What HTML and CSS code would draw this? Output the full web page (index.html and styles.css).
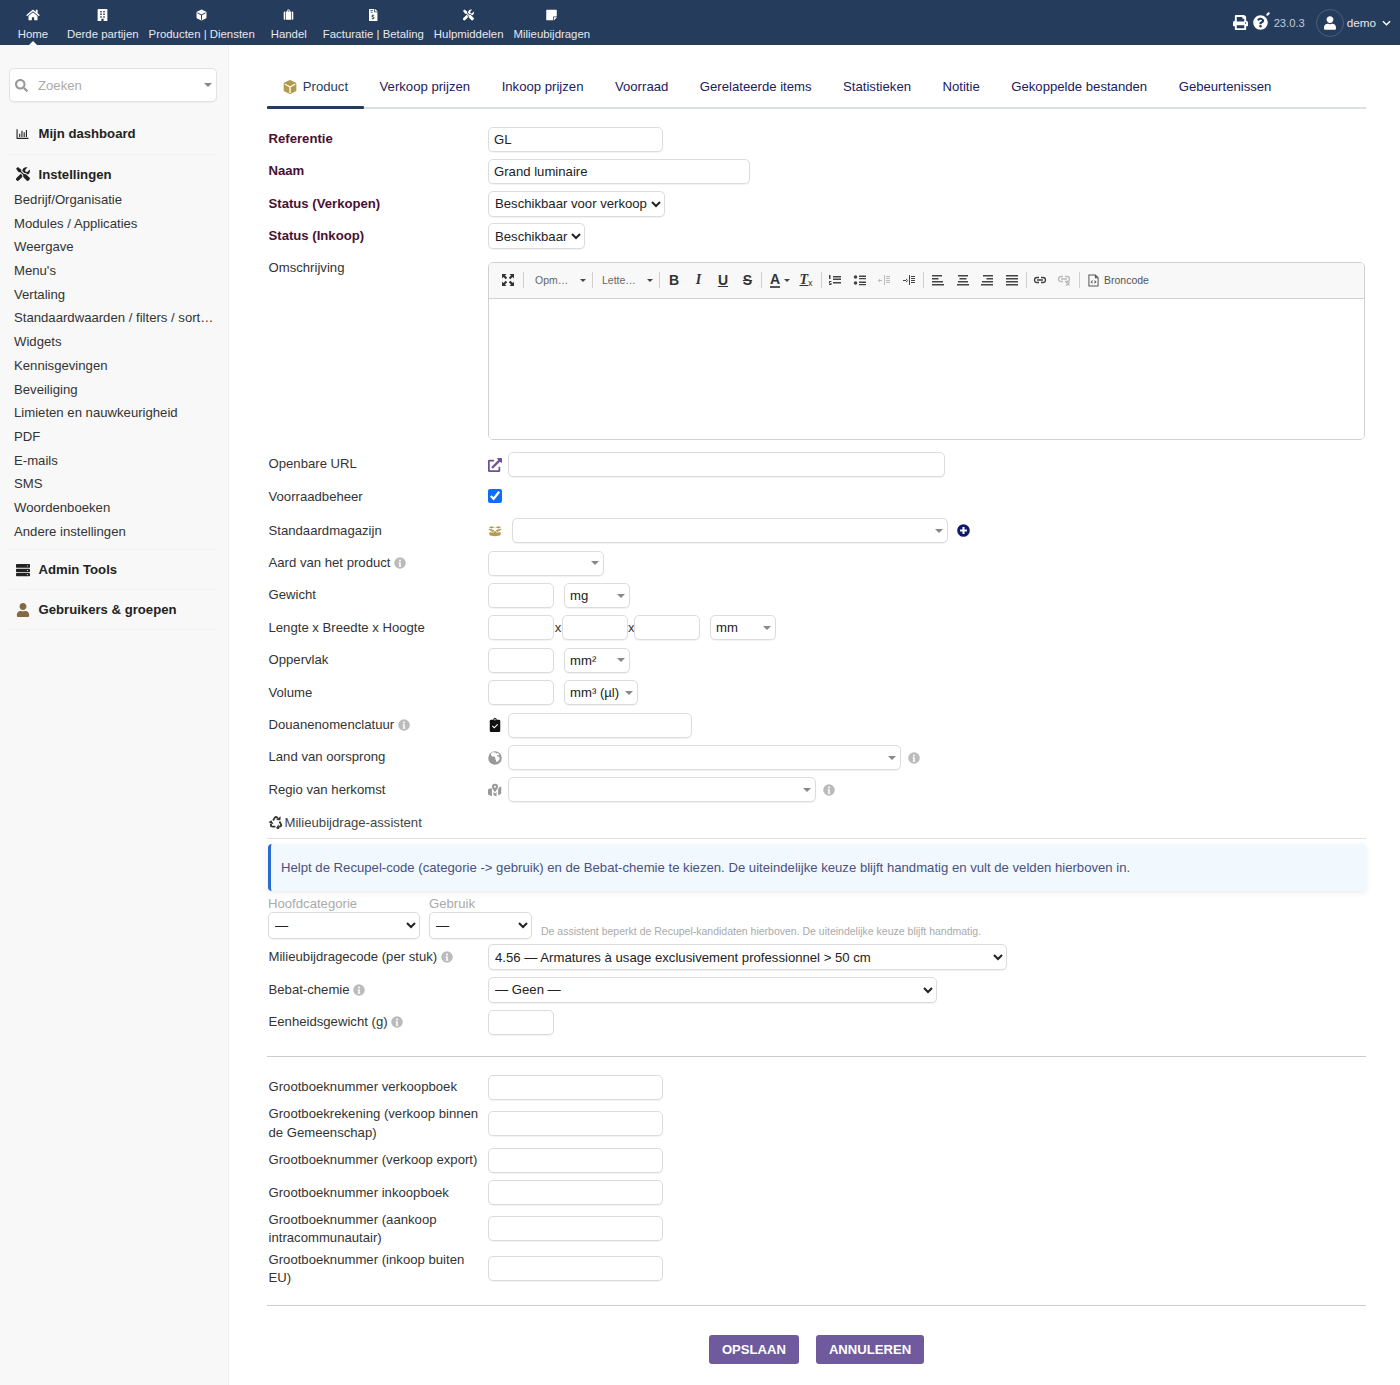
FILE: index.html
```html
<!DOCTYPE html>
<html lang="nl">
<head>
<meta charset="utf-8">
<title>Product</title>
<link rel="stylesheet" href="styles.css">
</head>
<body>
<svg class="defs" aria-hidden="true">
<symbol id="i-home" viewBox="0 0 576 512"><path d="M280.37 148.26L96 300.11V464a16 16 0 0 0 16 16l112.06-.29a16 16 0 0 0 15.92-16V368a16 16 0 0 1 16-16h64a16 16 0 0 1 16 16v95.64a16 16 0 0 0 16 16.05L464 480a16 16 0 0 0 16-16V300L295.67 148.26a12.19 12.19 0 0 0-15.3 0zM571.6 251.47L488 182.56V44.05a12 12 0 0 0-12-12h-56a12 12 0 0 0-12 12v72.61L318.47 43a48 48 0 0 0-61 0L4.34 251.47a12 12 0 0 0-1.6 16.9l25.5 31A12 12 0 0 0 45.15 301l235.22-193.74a12.19 12.19 0 0 1 15.3 0L530.9 301a12 12 0 0 0 16.9-1.6l25.5-31a12 12 0 0 0-1.7-16.93z"/></symbol>
<symbol id="i-user" viewBox="0 0 448 512"><path d="M224 256c70.7 0 128-57.3 128-128S294.7 0 224 0 96 57.3 96 128s57.3 128 128 128zm89.6 32h-16.7c-22.2 10.2-46.9 16-72.9 16s-50.6-5.8-72.9-16h-16.7C60.2 288 0 348.2 0 422.4V464c0 26.5 21.5 48 48 48h352c26.5 0 48-21.5 48-48v-41.6c0-74.2-60.2-134.4-134.4-134.4z"/></symbol>
<symbol id="i-building" viewBox="0 0 448 512"><path fill-rule="evenodd" d="M40 0h368a24 24 0 0 1 24 24v488H272v-96h-96v96H16V24A24 24 0 0 1 40 0zM128 80v64h64V80zm128 0v64h64V80zM128 192v64h64v-64zm128 0v64h64v-64zM128 304v64h64v-64zm128 0v64h64v-64z"/></symbol>
<symbol id="i-cube" viewBox="0 0 512 512"><path fill-rule="evenodd" d="M230 6a60 60 0 0 1 52 0l176 84a50 50 0 0 1 30 46v240a50 50 0 0 1-30 46L282 506a60 60 0 0 1-52 0L54 422a50 50 0 0 1-30-46V136a50 50 0 0 1 30-46zM64 132v46l168 84v212h48V262l168-84v-46L256 228z"/></symbol>
<symbol id="i-suitcase" viewBox="0 0 512 512"><path d="M128 480h256V96h-64V48a48 48 0 0 0-48-48h-32a48 48 0 0 0-48 48v48h-64zM224 48h64v48h-64zM32 144a48 48 0 0 1 48-48h16v384H80a48 48 0 0 1-48-48zM416 96h16a48 48 0 0 1 48 48v288a48 48 0 0 1-48 48h-16z"/></symbol>
<symbol id="i-invoice" viewBox="0 0 384 512"><path fill-rule="evenodd" d="M24 0h200v136h136v352a24 24 0 0 1-24 24H24a24 24 0 0 1-24-24V24A24 24 0 0 1 24 0zM256 0l128 104H256zM64 56v32h96V56zm0 64v32h96v-32zm120 112h-32v26c-26 4-44 22-44 46 0 30 26 42 52 50 24 7 28 12 28 20 0 10-10 14-24 14-12 0-28-6-36-12l-14 28c10 8 24 14 38 16v26h32v-26c28-4 46-22 46-48 0-30-24-42-52-50-22-6-28-12-28-20 0-8 8-12 20-12 10 0 22 4 32 10l14-28c-8-6-20-10-32-12z"/></symbol>
<symbol id="i-tools" viewBox="0 0 512 512"><path d="M501 396L384 279c-23-23-57-27-85-14L194 160V96L66 0 2 64l96 128h64l105 105c-13 28-9 62 14 85l117 117c15 15 38 15 53 0l50-50c14-15 14-38 0-53zM332 222c28 0 55 11 75 31l20 20c16-7 31-17 43-29 36-36 48-86 37-132-2-9-13-12-20-5l-74 74-67-11-11-67 74-74c7-7 4-18-5-20-46-11-97 1-132 37-28 28-41 64-40 101l82 82c5-1 12-7 18-7zM229 303l-57-57L18 399c-25 25-25 65 0 90s65 25 90 0l125-124c-8-20-10-42-4-62z"/></symbol>
<symbol id="i-note" viewBox="0 0 448 512"><path d="M312 320h136V56a24 24 0 0 0-24-24H24A24 24 0 0 0 0 56v400a24 24 0 0 0 24 24h264V344a24 24 0 0 1 24-24zm129 55L343 473a24 24 0 0 1-17 7h-6V352h128v6a24 24 0 0 1-7 17z"/></symbol>
<symbol id="i-print" viewBox="0 0 512 512"><path fill-rule="evenodd" d="M448 192V77a32 32 0 0 0-9-23L393 9a32 32 0 0 0-23-9H96A32 32 0 0 0 64 32v160c-35 0-64 29-64 64v112c0 9 7 16 16 16h48v112c0 18 14 32 32 32h320c18 0 32-14 32-32V384h48c9 0 16-7 16-16V256c0-35-29-64-64-64zM384 448H128v-96h256zm0-224H128V64h192v48c0 9 7 16 16 16h48zm48 72a24 24 0 1 1 0-48 24 24 0 0 1 0 48z"/></symbol>
<symbol id="i-question" viewBox="0 0 512 512"><path d="M504 256c0 137-111 248-248 248S8 393 8 256 119 8 256 8s248 111 248 248zM263 90c-54 0-89 23-116 63a12 12 0 0 0 3 16l35 26c5 4 13 3 17-2 18-22 30-35 57-35 20 0 45 13 45 33 0 15-12 22-32 34-24 13-55 30-55 71v6c0 7 5 12 12 12h56c7 0 12-5 12-12v-2c0-28 83-29 83-106 0-58-60-104-117-104zm-7 248a46 46 0 1 0 0 92 46 46 0 0 0 0-92z"/></symbol>
<symbol id="i-search" viewBox="0 0 512 512"><path d="M505 442.700L405.300 343c-4.500-4.500-10.600-7-17-7H372c27.600-35.300 44-79.700 44-128C416 93.100 322.900 0 208 0S0 93.100 0 208s93.100 208 208 208c48.300 0 92.700-16.400 128-44v16.300c0 6.400 2.500 12.500 7 17l99.700 99.700c9.400 9.400 24.600 9.400 33.900 0l28.300-28.300c9.400-9.400 9.400-24.600.1-34zM208 336c-70.700 0-128-57.200-128-128 0-70.700 57.200-128 128-128 70.700 0 128 57.200 128 128 0 70.700-57.200 128-128 128z"/></symbol>
<symbol id="i-chart" viewBox="0 0 512 512"><path d="M0 48h48v368h464v48H24a24 24 0 0 1-24-24zM112 240h48v144h-48zM208 112h48v272h-48zM304 176h48v208h-48zM400 80h48v304h-48z"/></symbol>
<symbol id="i-server" viewBox="0 0 512 512"><path fill-rule="evenodd" d="M32 32h448a32 32 0 0 1 32 32v80a32 32 0 0 1-32 32H32a32 32 0 0 1-32-32V64a32 32 0 0 1 32-32zM416 84a20 20 0 1 0 0 40 20 20 0 0 0 0-40zM32 208h448a32 32 0 0 1 32 32v64a32 32 0 0 1-32 32H32a32 32 0 0 1-32-32v-64a32 32 0 0 1 32-32zM416 252a20 20 0 1 0 0 40 20 20 0 0 0 0-40zM32 368h448a32 32 0 0 1 32 32v48a32 32 0 0 1-32 32H32a32 32 0 0 1-32-32v-48a32 32 0 0 1 32-32zM416 404a20 20 0 1 0 0 40 20 20 0 0 0 0-40z"/></symbol>
<symbol id="i-info" viewBox="0 0 512 512"><path fill-rule="evenodd" d="M256 8a248 248 0 1 1 0 496 248 248 0 0 1 0-496zM256 110a42 42 0 1 0 0 84 42 42 0 0 0 0-84zM200 226v48h24v96h-24v48h112v-48h-24V226z"/></symbol>
<symbol id="i-ext" viewBox="0 0 512 512"><path d="M432 320h-32a16 16 0 0 0-16 16v112H64V128h144a16 16 0 0 0 16-16V80a16 16 0 0 0-16-16H48a48 48 0 0 0-48 48v352a48 48 0 0 0 48 48h352a48 48 0 0 0 48-48V336a16 16 0 0 0-16-16zM488 0H360c-21.400 0-32 25.900-17 41l35.700 35.700L135 320.400a24 24 0 0 0 0 34l22.700 22.600a24 24 0 0 0 34 0l243.600-243.700L471 169c15 15 41 4.500 41-17V24a24 24 0 0 0-24-24z"/></symbol>
<symbol id="i-box" viewBox="0 0 640 512"><path d="M40 90l130-50 150 55 150-55 130 50-110 50-170-50-170 50zM10 180l60-30 220 70-70 90zM630 180l-60-30-220 70 70 90zM64 300l170 40 86-90 86 90 170-40v120c0 20-10 30-30 36L320 500 94 456c-20-6-30-16-30-36z"/></symbol>
<symbol id="i-clip" viewBox="0 0 384 512"><path fill-rule="evenodd" d="M48 64h80a64 64 0 0 1 128 0h80a48 48 0 0 1 48 48v352a48 48 0 0 1-48 48H48a48 48 0 0 1-48-48V112a48 48 0 0 1 48-48zM192 40a24 24 0 1 0 0 48 24 24 0 0 0 0-48zM305 248l-28-28-113 112-56-57-28 28 84 85z"/></symbol>
<symbol id="i-globe" viewBox="0 0 512 512"><path d="M256 8a248 248 0 1 0 0 496 248 248 0 0 0 0-496zm160 124l-24 24-48-8-16 24 32 32h40l24 40v40c-16 48-64 104-104 120l-24-16v-56l-32-32 8-48-48-48h-72l-48-64 16-56 32-32 56-16 24 16 48-8-8 40 32 8 40-24z"/></symbol>
<symbol id="i-map" viewBox="0 0 576 512"><path fill-rule="evenodd" d="M288 0a126 126 0 0 1 126 126c0 56-75 156-104 190a29 29 0 0 1-44 0c-29-34-104-134-104-190A126 126 0 0 1 288 0zm0 84a42 42 0 1 0 0 84 42 42 0 0 0 0-84zM32 215l104-42c6 16 14 33 24 50v289L22 448a32 32 0 0 1-22-30V245a32 32 0 0 1 32-30zM224 330l36 46c14 18 42 18 56 0l36-46v182l-128-43zM544 155v236a32 32 0 0 1-20 30l-108 46V223c16-26 28-50 36-74l72-28a20 20 0 0 1 20 34z"/></symbol>
<symbol id="i-recycle" viewBox="0 0 24 24">
  <path d="M7 9.500L10 4.500Q12 2.500 14 4.500L15 6" fill="none" stroke-width="3" stroke="currentColor"/><path d="M12 8.500l7.500.5.500-7z"/>
  <g transform="rotate(120 12 13.500)"><path d="M7 9.500L10 4.500Q12 2.500 14 4.500L15 6" fill="none" stroke-width="3" stroke="currentColor"/><path d="M12 8.500l7.500.5.500-7z"/></g>
  <g transform="rotate(240 12 13.500)"><path d="M7 9.500L10 4.500Q12 2.500 14 4.500L15 6" fill="none" stroke-width="3" stroke="currentColor"/><path d="M12 8.500l7.500.5.500-7z"/></g>
</symbol>
<symbol id="i-plus" viewBox="0 0 512 512"><path fill-rule="evenodd" d="M256 8a248 248 0 1 1 0 496 248 248 0 0 1 0-496zM216 120v96h-96v80h96v96h80v-96h96v-80h-96v-96z"/></symbol>
</svg>

<header class="topbar">
  <nav class="topnav">
    <a class="topitem active"><svg class="ti wide"><use href="#i-home"/></svg><span>Home</span></a>
    <a class="topitem"><svg class="ti"><use href="#i-building"/></svg><span>Derde partijen</span></a>
    <a class="topitem"><svg class="ti"><use href="#i-cube"/></svg><span>Producten | Diensten</span></a>
    <a class="topitem"><svg class="ti"><use href="#i-suitcase"/></svg><span>Handel</span></a>
    <a class="topitem"><svg class="ti"><use href="#i-invoice"/></svg><span>Facturatie | Betaling</span></a>
    <a class="topitem"><svg class="ti"><use href="#i-tools"/></svg><span>Hulpmiddelen</span></a>
    <a class="topitem"><svg class="ti"><use href="#i-note"/></svg><span>Milieubijdragen</span></a>
  </nav>
  <div class="topright">
    <svg class="tr-icon"><use href="#i-print"/></svg>
    <span class="helpicon"><svg class="tr-icon"><use href="#i-question"/></svg><i class="helpdot"></i></span>
    <span class="version">23.0.3</span>
    <span class="avatar"><svg class="avatar-i"><use href="#i-user"/></svg></span>
    <span class="username">demo</span>
    <svg class="chev" viewBox="0 0 10 6"><path d="M1 1l4 4 4-4" fill="none" stroke="currentColor" stroke-width="1.500"/></svg>
  </div>
</header>

<div class="layout">
  <aside class="sidebar">
    <div class="search"><svg class="search-i"><use href="#i-search"/></svg><span class="search-t">Zoeken</span><i class="caret"></i></div>
    <div class="sb-block first"><svg class="sb-i"><use href="#i-chart"/></svg><span>Mijn dashboard</span></div>
    <div class="sb-group">
      <div class="sb-head"><svg class="sb-i big"><use href="#i-tools"/></svg><span>Instellingen</span></div>
      <a class="sb-link">Bedrijf/Organisatie</a>
      <a class="sb-link">Modules / Applicaties</a>
      <a class="sb-link">Weergave</a>
      <a class="sb-link">Menu's</a>
      <a class="sb-link">Vertaling</a>
      <a class="sb-link">Standaardwaarden / filters / sort…</a>
      <a class="sb-link">Widgets</a>
      <a class="sb-link">Kennisgevingen</a>
      <a class="sb-link">Beveiliging</a>
      <a class="sb-link">Limieten en nauwkeurigheid</a>
      <a class="sb-link">PDF</a>
      <a class="sb-link">E-mails</a>
      <a class="sb-link">SMS</a>
      <a class="sb-link">Woordenboeken</a>
      <a class="sb-link">Andere instellingen</a>
    </div>
    <div class="sb-block"><svg class="sb-i big"><use href="#i-server"/></svg><span>Admin Tools</span></div>
    <div class="sb-block"><svg class="sb-i big brown"><use href="#i-user"/></svg><span>Gebruikers &amp; groepen</span></div>
  </aside>

  <main class="main">
    <div class="tabs">
      <a class="tab active"><svg class="tab-i"><use href="#i-cube"/></svg>Product</a>
      <a class="tab">Verkoop prijzen</a>
      <a class="tab">Inkoop prijzen</a>
      <a class="tab">Voorraad</a>
      <a class="tab">Gerelateerde items</a>
      <a class="tab">Statistieken</a>
      <a class="tab">Notitie</a>
      <a class="tab">Gekoppelde bestanden</a>
      <a class="tab">Gebeurtenissen</a>
    </div>

    <form class="form">
      <div class="row"><label class="lab req">Referentie</label><div class="f"><input class="in w175" value="GL"></div></div>
      <div class="row"><label class="lab req">Naam</label><div class="f"><input class="in w262" value="Grand luminaire"></div></div>
      <div class="row"><label class="lab req">Status (Verkopen)</label><div class="f"><select class="nat w177"><option>Beschikbaar voor verkoop</option></select></div></div>
      <div class="row"><label class="lab req">Status (Inkoop)</label><div class="f"><select class="nat w97"><option>Beschikbaar</option></select></div></div>
      <div class="row top"><label class="lab">Omschrijving</label>
        <div class="editor">
          <div class="toolbar">
            <span class="tb fs"><svg viewBox="0 0 14 14"><path d="M1 1h4.500L4 2.500 6.200 4.700 4.700 6.200 2.500 4 1 5.500zM13 1v4.500L11.500 4 9.300 6.200 7.800 4.700 10 2.500 8.500 1zM1 13V8.500L2.500 10l2.200-2.200 1.500 1.500L4 11.500 5.500 13zM13 13H8.500l1.500-1.500-2.200-2.200 1.500-1.500L12 10l1-1.500z"/></svg></span>
            <i class="sep s1"></i>
            <span class="combo">Opm…<i class="tcaret"></i></span>
            <i class="sep s2"></i>
            <span class="combo">Lette…<i class="tcaret"></i></span>
            <i class="sep s3"></i>
            <span class="tb b">B</span><span class="tb it">I</span><span class="tb u">U</span><span class="tb s">S</span>
            <i class="sep s4"></i>
            <span class="tb color"><span>A</span><i class="tcaret"></i></span>
            <span class="tb clear"><span>T</span><small>x</small></span>
            <i class="sep s5"></i>
            <span class="tb ic"><svg viewBox="0 0 14 12"><path d="M1 1h1.500v4H1zM1 7h2.500v1H2v1h1.500v2H1v-1h1.500V9.500H1zM5 2h8v1.500H5zM5 4.500h8V6H5zM5 8h8v1.500H5z"/></svg></span>
            <span class="tb ic"><svg viewBox="0 0 14 12"><circle cx="2.500" cy="3" r="1.800"/><circle cx="2.500" cy="9" r="1.800"/><path d="M6 1.500h7V3H6zM6 4h7v1.200H6zM6 7.500h7V9H6zM6 10h7v1.200H6z"/></svg></span>
            <span class="tb ic off"><svg viewBox="0 0 14 12"><path d="M7 1h1v10H7zM9 2h4v1H9zM9 4h4v1H9zM9 6h4v1H9zM9 8h4v1H9zM1 6h4v1H1zM1 6.500L3 4.500v4z"/></svg></span>
            <span class="tb ic"><svg viewBox="0 0 14 12"><path d="M7 1h1v10H7zM9 2h4v1H9zM9 4h4v1H9zM9 6h4v1H9zM9 8h4v1H9zM1 6h4v1H1zM6 6.500L4 4.500v4z"/></svg></span>
            <i class="sep s6"></i>
            <span class="tb ic"><svg viewBox="0 0 14 12"><path d="M1 1h10v1.500H1zM1 4h6.500v1.500H1zM1 7h11v1.500H1zM1 10h12v1.500H1z"/></svg></span>
            <span class="tb ic"><svg viewBox="0 0 14 12"><path d="M2 1h10v1.500H2zM3.500 4h7v1.500h-7zM2 7h10v1.500H2zM1 10h12v1.500H1z"/></svg></span>
            <span class="tb ic"><svg viewBox="0 0 14 12"><path d="M3 1h10v1.500H3zM6.500 4H13v1.500H6.500zM2 7h11v1.500H2zM1 10h12v1.500H1z"/></svg></span>
            <span class="tb ic"><svg viewBox="0 0 14 12"><path d="M1 1h12v1.500H1zM1 4h12v1.500H1zM1 7h12v1.500H1zM1 10h12v1.500H1z"/></svg></span>
            <i class="sep s7"></i>
            <span class="tb ic"><svg viewBox="0 0 14 12"><path fill="none" stroke="currentColor" stroke-width="1.300" d="M6 3.500H4a2.500 2.500 0 0 0 0 5h2M8 3.500h2a2.500 2.500 0 0 1 0 5H8M4 6h6"/></svg></span>
            <span class="tb ic off"><svg viewBox="0 0 14 12"><path fill="none" stroke="currentColor" stroke-width="1.300" d="M6 2.500H4a2.500 2.500 0 0 0 0 5h2M8 2.500h2a2.500 2.500 0 0 1 0 5H8M4 5h6M9 8l3.500 3.500M12.500 8L9 11.500"/></svg></span>
            <i class="sep s8"></i>
            <span class="source"><svg viewBox="0 0 12 14"><path fill="none" stroke="currentColor" stroke-width="1.100" d="M1 1h7l3 3v9H1zM8 1v3h3M5 7L3.500 8.500 5 10M7 7l1.500 1.500L7 10"/></svg>Broncode</span>
          </div>
          <div class="editarea"></div>
        </div>
      </div>

      <div class="row"><label class="lab">Openbare URL</label><div class="f"><svg class="fi purple"><use href="#i-ext"/></svg><input class="in w437 g6"></div></div>
      <div class="row"><label class="lab">Voorraadbeheer</label><div class="f"><input type="checkbox" class="chk" checked></div></div>
      <div class="row mag"><label class="lab">Standaardmagazijn</label><div class="f"><svg class="fi gold"><use href="#i-box"/></svg><span class="sel w436 g10"><i class="caret"></i></span><svg class="plus"><use href="#i-plus"/></svg></div></div>
      <div class="row"><label class="lab">Aard van het product <svg class="info"><use href="#i-info"/></svg></label><div class="f"><span class="sel w116"><i class="caret"></i></span></div></div>
      <div class="row"><label class="lab">Gewicht</label><div class="f"><input class="in w66"><span class="sel w66 g10">mg<i class="caret"></i></span></div></div>
      <div class="row"><label class="lab">Lengte x Breedte x Hoogte</label><div class="f"><input class="in w66"><span class="x">x</span><input class="in w66"><span class="x x2">x</span><input class="in w66"><span class="sel w66 g10">mm<i class="caret"></i></span></div></div>
      <div class="row"><label class="lab">Oppervlak</label><div class="f"><input class="in w66"><span class="sel w66 g10">mm²<i class="caret"></i></span></div></div>
      <div class="row"><label class="lab">Volume</label><div class="f"><input class="in w66"><span class="sel w74 g10">mm³ (µl)<i class="caret"></i></span></div></div>
      <div class="row"><label class="lab">Douanenomenclatuur <svg class="info"><use href="#i-info"/></svg></label><div class="f"><svg class="fi dark"><use href="#i-clip"/></svg><input class="in w184 g6"></div></div>
      <div class="row"><label class="lab">Land van oorsprong</label><div class="f"><svg class="fi gray"><use href="#i-globe"/></svg><span class="sel w393 g6"><i class="caret"></i></span><svg class="info after"><use href="#i-info"/></svg></div></div>
      <div class="row"><label class="lab">Regio van herkomst</label><div class="f"><svg class="fi gray"><use href="#i-map"/></svg><span class="sel w308 g6"><i class="caret"></i></span><svg class="info after"><use href="#i-info"/></svg></div></div>
      <div class="assistant"><svg class="rec"><use href="#i-recycle"/></svg>Milieubijdrage-assistent</div>
      <div class="notice">Helpt de Recupel-code (categorie -&gt; gebruik) en de Bebat-chemie te kiezen. De uiteindelijke keuze blijft handmatig en vult de velden hierboven in.</div>
      <div class="assist-row">
        <div class="assist-col"><span class="assist-lab">Hoofdcategorie</span><select class="nat tall w152"><option>—</option></select></div>
        <div class="assist-col"><span class="assist-lab">Gebruik</span><select class="nat tall w103"><option>—</option></select></div>
        <small class="assist-note">De assistent beperkt de Recupel-kandidaten hierboven. De uiteindelijke keuze blijft handmatig.</small>
      </div>
      <div class="row"><label class="lab">Milieubijdragecode (per stuk) <svg class="info"><use href="#i-info"/></svg></label><div class="f"><select class="nat w519"><option>4.56 — Armatures à usage exclusivement professionnel &gt; 50 cm</option></select></div></div>
      <div class="row"><label class="lab">Bebat-chemie <svg class="info"><use href="#i-info"/></svg></label><div class="f"><select class="nat w449"><option>— Geen —</option></select></div></div>
      <div class="row"><label class="lab">Eenheidsgewicht (g) <svg class="info"><use href="#i-info"/></svg></label><div class="f"><input class="in w66"></div></div>
      <hr class="sep-a">
      <div class="row"><label class="lab">Grootboeknummer verkoopboek</label><div class="f"><input class="in w175"></div></div>
      <div class="row two"><label class="lab">Grootboekrekening (verkoop binnen de Gemeenschap)</label><div class="f"><input class="in w175"></div></div>
      <div class="row nudge"><label class="lab">Grootboeknummer (verkoop export)</label><div class="f"><input class="in w175"></div></div>
      <div class="row"><label class="lab">Grootboeknummer inkoopboek</label><div class="f"><input class="in w175"></div></div>
      <div class="row two"><label class="lab">Grootboeknummer (aankoop intracommunautair)</label><div class="f"><input class="in w175"></div></div>
      <div class="row two"><label class="lab">Grootboeknummer (inkoop buiten EU)</label><div class="f"><input class="in w175"></div></div>
      <hr class="sep-b">
      <div class="actions"><button type="button" class="btn">OPSLAAN</button><button type="button" class="btn">ANNULEREN</button></div>
    </form>
  </main>
</div>
</body>
</html>
```
FILE: styles.css
```css
* { box-sizing: border-box; }
html, body { margin: 0; padding: 0; }
body { font-family: "Liberation Sans", Arial, sans-serif; font-size: 13.15px; color: #333; background: #fff; height: 1385px; overflow: hidden; }
.defs { display: none; }

.topbar { height: 45px; background: #263c5c; display: flex; justify-content: space-between; color: #f0f0f5; }
.topnav { display: flex; padding-left: 4px; }
.topitem { min-width: 58px; padding: 0 5px; display: flex; flex-direction: column; align-items: center; position: relative; font-size: 11.4px; color: #e6e8ee; }
.topitem span { margin-top: 4.5px; line-height: 16px; white-space: nowrap; }
.ti { width: 11px; height: 12px; margin-top: 9px; fill: #fff; }
.ti.wide { width: 14px; }
.topitem.active::after { content: ""; position: absolute; left: 50%; bottom: 0; margin-left: -4px; border: 4px solid transparent; border-top: 0; border-bottom-color: #fff; }
.topright { display: flex; align-items: center; padding-right: 9px; }
.tr-icon { width: 15px; height: 15px; fill: #fff; display: block; }
.helpicon { position: relative; margin-left: 5px; display: block; }
.helpdot { position: absolute; right: -2px; top: -2px; width: 4px; height: 2px; border-radius: 1px; background: #fff; transform: rotate(-45deg); }
.version { margin-left: 6px; font-size: 11.2px; color: #c4cbd8; }
.avatar { margin-left: 11px; width: 28px; height: 28px; border-radius: 50%; border: 1px solid #4c607d; display: flex; align-items: center; justify-content: center; }
.avatar-i { width: 12px; height: 14px; fill: #fff; }
.username { margin-left: 3px; font-size: 11.7px; color: #e6e8ee; }
.chev { width: 9px; height: 6px; margin-left: 6px; color: #fff; }

.layout { display: flex; height: 1340px; }
.sidebar { width: 229px; flex: none; background: #f8f8f8; border-right: 1px solid #efefef; padding: 23px 11px 0 9px; }
.search { height: 34px; width: 208px; background: #fff; border: 1px solid #e2e2e2; border-radius: 5px; box-shadow: 0 1px 1px #eee; display: flex; align-items: center; padding: 0 8px 0 5px; color: #aaa; position: relative; }
.search-i { width: 13px; height: 13px; fill: #999; }
.search-t { margin-left: 10px; color: #aaa; }
.caret { position: absolute; right: 4px; top: 50%; margin-top: -2px; border: 4px solid transparent; border-bottom: 0; border-top: 4px solid #888; }
.sb-block { display: flex; align-items: center; height: 40px; font-weight: bold; color: #222; border-bottom: 1px solid #f0f0f0; }
.sb-block.first { margin-top: 12px; height: 41px; padding-bottom: 1px; }
.sb-group { border-bottom: 1px solid #f0f0f0; padding-bottom: 6px; }
.sb-head { display: flex; align-items: center; height: 33px; padding-top: 5px; font-weight: bold; color: #222; }
.sb-i { width: 13px; height: 12px; margin: 0 10px 0 6.5px; fill: #222; flex: none; }
.sb-i.big { width: 14px; height: 14px; margin-right: 9px; }
.sb-i.brown { fill: #846a42; }
.sb-link { display: block; height: 23.7px; line-height: 23.7px; margin-left: 5px; color: #333; white-space: nowrap; }

.main { flex: 1; padding: 0 34px 0 38px; min-width: 0; }
.tabs { display: flex; height: 64px; border-bottom: 2px solid #dde0e3; align-items: stretch; }
.tab { display: flex; align-items: center; padding: 19px 15.75px 0; margin-bottom: -2px; color: #1a2060; white-space: nowrap; position: relative; }
.tab.active { color: #263c5c; }
.tab.active::after { content: ""; position: absolute; left: 0; right: 0; bottom: 0; height: 3px; background: #263c5c; border-radius: 1px; }
.tab-i { width: 14px; height: 14px; fill: #b39b4d; margin-right: 6px; }

.form { margin-top: 14px; }
.row { display: grid; grid-template-columns: 221px 1fr; align-items: center; min-height: 32.4px; }
.row.two { min-height: 40px; }
.row.mag { margin-top: 1.5px; }
.row.nudge { margin-top: .5px; }
.row.top { align-items: start; padding: 6.9px 0 8.4px; }
.lab { padding-left: 1.5px; padding-right: 8px; line-height: 18.4px; color: #333; }
.lab.req { font-weight: bold; color: #4a0f33; }
.f { display: flex; align-items: center; }
.in, .sel, .nat { height: 25px; border: 1px solid #dcdcdc; border-radius: 5px; background: #fff; font: 13.15px "Liberation Sans", Arial, sans-serif; color: #222; box-shadow: 0 1px 1px #f2f2f2; }
.in { padding: 0 5px; }
.nat { height: 26px; padding: 0 0 0 2px; }
.nat.tall { height: 27px; }
.sel { display: inline-flex; align-items: center; padding: 0 5px; position: relative; }
.sel .caret { right: 4.5px; }
.w66 { width: 66px; } .w74 { width: 74px; } .w97 { width: 97px; } .w103 { width: 103px; } .w116 { width: 116px; } .w152 { width: 152px; } .w175 { width: 175px; } .w177 { width: 177px; } .w184 { width: 184px; } .w262 { width: 262px; } .w308 { width: 308px; } .w393 { width: 393px; } .w436 { width: 436px; } .w437 { width: 437px; } .w449 { width: 449px; } .w519 { width: 519px; }
.g6 { margin-left: 6px; } .g10 { margin-left: 10px; }
.x { width: 8px; text-align: center; }
.x2 { width: 6px; }
.fi { width: 14px; height: 14px; flex: none; }
.purple { fill: #6f4f96; } .gold { fill: #b39b4d; } .dark { fill: #111; } .gray { fill: #999; }
.chk { width: 14px; height: 14px; margin: 0 0 2px; accent-color: #0d6efd; }
.plus { width: 13px; height: 13px; margin-left: 9px; fill: #0e1a6b; }
.info { width: 12px; height: 12px; fill: #bbb; vertical-align: -2px; }
.info.after { margin-left: 7px; }

.editor { width: 877px; height: 178px; margin-top: 2.5px; border: 1px solid #d1d1d1; border-radius: 5px; overflow: hidden; }
.toolbar { height: 36px; background: #f8f8f8; border-bottom: 1px solid #d1d1d1; display: flex; align-items: center; padding-left: 8px; color: #333; font-size: 10.5px; }
.sep { width: 1px; height: 16px; background: #cfcfcf; flex: none; }
.s1 { margin: 0 3.5px 0 1px; } .s2 { margin: 0 1px 0 2px; } .s3 { margin: 0 3px 0 2px; } .s4 { margin: 0 2px 0 0; } .s5 { margin: 0 2px 0 1.5px; } .s6 { margin: 0 3px 0 1px; } .s7 { margin: 0 2.3px 0 .7px; } .s8 { margin: 0 8px 0 1px; }
.tb { width: 22px; height: 18px; display: inline-flex; align-items: center; justify-content: center; flex: none; font-size: 14px; color: #333; position: relative; margin-right: 2.5px; }
.tb svg { width: 14px; height: 12px; fill: currentColor; }
.tb.fs svg { width: 14px; height: 14px; }
.b { font-weight: bold; }
.it { font-style: italic; font-weight: bold; font-family: "Liberation Serif", serif; }
.u { text-decoration: underline; font-weight: bold; }
.s { text-decoration: line-through; font-weight: bold; }
.ic { color: #444; }
.ic.off { color: #bbb; }
.combo { width: 63px; padding-left: 8px; color: #666; position: relative; }
.tcaret { position: absolute; right: 4px; top: 50%; margin-top: -1px; border: 3px solid transparent; border-bottom: 0; border-top: 3px solid #444; }
.tb.color { width: 26px; justify-content: flex-start; padding-left: 6px; }
.color span { border-bottom: 2px solid #555; line-height: 13px; font-weight: bold; }
.color .tcaret { right: 0; }
.tb.clear { margin-left: 2.5px; }
.clear span { font-style: italic; font-weight: bold; text-decoration: underline; font-family: "Liberation Serif", serif; }
.clear small { font-size: 9px; margin-top: 5px; }
.source { display: inline-flex; align-items: center; color: #555; }
.source svg { width: 11px; height: 13px; margin-right: 5px; }
.editarea { height: 141px; background: #fff; }

.assistant { display: flex; align-items: center; height: 33px; border-bottom: 1px solid #dde0e3; padding-left: 1.5px; color: #444; }
.rec { width: 14px; height: 14px; margin-right: 2px; fill: #333; color: #333; }
.notice { margin-top: 5px; height: 47px; border-left: 3px solid #2a6bd0; border-radius: 4px; background: #f1f8fe; box-shadow: 0 2px 6px rgba(0,0,0,.08); display: flex; align-items: center; padding-left: 10px; margin-left: 1px; color: #4a5080; }
.assist-row { display: flex; align-items: flex-end; margin: 4px 0 2px 1px; }
.assist-col { display: flex; flex-direction: column; margin-right: 9px; }
.assist-lab { color: #aaa; line-height: 17px; }
.assist-note { font-size: 10.5px; color: #aaa; line-height: 16px; }
.sep-a { border: 0; border-top: 1px solid #ccc; margin: 18px 0 14px; }
.sep-b { border: 0; border-top: 1px solid #ccc; margin: 16px 0 0; }
.actions { display: flex; justify-content: center; gap: 17px; margin-top: 29px; }
.btn { height: 29px; padding: 0 13px; border: 0; border-radius: 3px; background: #6f5a9e; color: #fff; font: bold 13.1px "Liberation Sans", Arial, sans-serif; }
```
